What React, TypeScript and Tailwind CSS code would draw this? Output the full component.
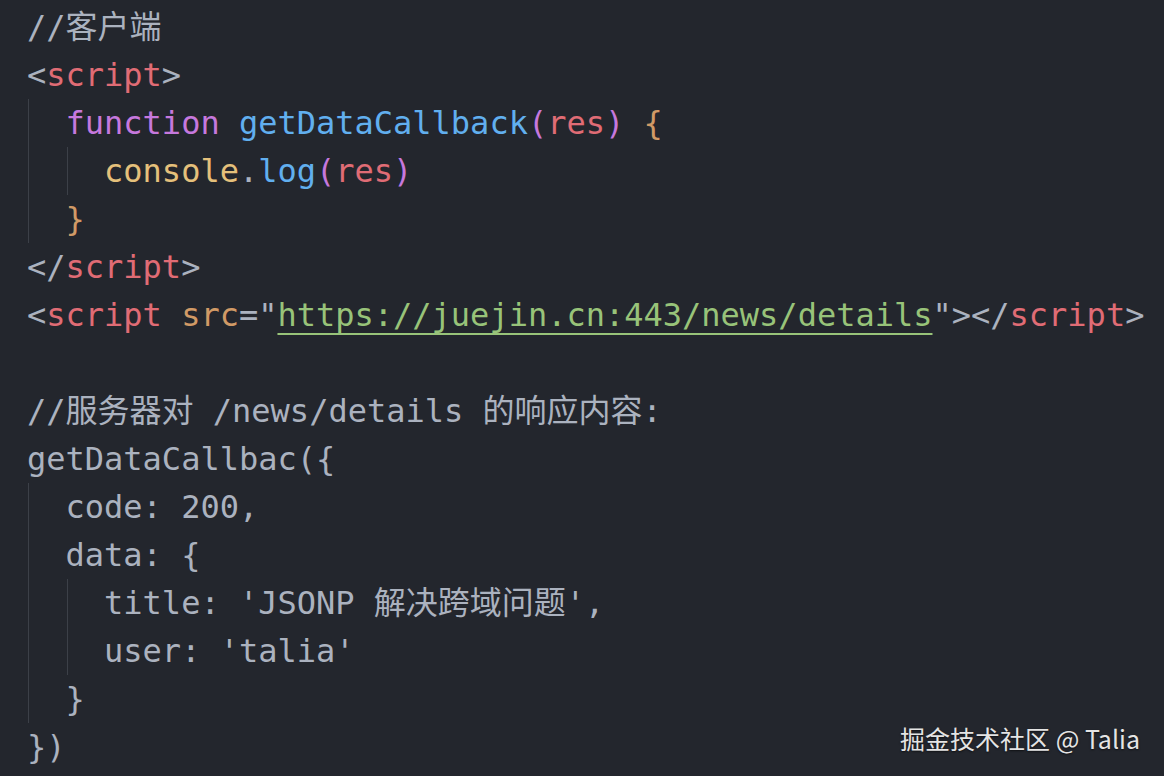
import React from "react";

type Tok = [string, string?];

const G = "text-[#abb2bf]";
const R = "text-[#e06c75]";
const P = "text-[#c678dd]";
const B = "text-[#61afef]";
const Y = "text-[#e5c07b]";
const O = "text-[#d19a66]";
const GR = "text-[#98c379]";

type Line = { indent: number; guides: number; toks: Tok[] };

const lines: Line[] = [
  { indent: 0, guides: 0, toks: [["//客户端", G]] },
  { indent: 0, guides: 0, toks: [["<", G], ["script", R], [">", G]] },
  {
    indent: 1,
    guides: 1,
    toks: [
      ["function", P],
      [" ", G],
      ["getDataCallback", B],
      ["(", P],
      ["res", R],
      [")", P],
      [" ", G],
      ["{", O],
    ],
  },
  {
    indent: 2,
    guides: 2,
    toks: [
      ["console", Y],
      [".", G],
      ["log", B],
      ["(", P],
      ["res", R],
      [")", P],
    ],
  },
  { indent: 1, guides: 1, toks: [["}", O]] },
  { indent: 0, guides: 0, toks: [["</", G], ["script", R], [">", G]] },
  {
    indent: 0,
    guides: 0,
    toks: [
      ["<", G],
      ["script", R],
      [" ", G],
      ["src", O],
      ["=\"", G],
      ["URL", GR],
      ["\">", G],
      ["</", G],
      ["script", R],
      [">", G],
    ],
  },
  { indent: 0, guides: 0, toks: [] },
  { indent: 0, guides: 0, toks: [["//服务器对 /news/details 的响应内容:", G]] },
  { indent: 0, guides: 0, toks: [["getDataCallbac({", G]] },
  { indent: 1, guides: 1, toks: [["code: 200,", G]] },
  { indent: 1, guides: 1, toks: [["data: {", G]] },
  { indent: 2, guides: 2, toks: [["title: 'JSONP 解决跨域问题',", G]] },
  { indent: 2, guides: 2, toks: [["user: 'talia'", G]] },
  { indent: 1, guides: 1, toks: [["}", G]] },
  { indent: 0, guides: 0, toks: [["})", G]] },
];

export default function App() {
  return (
    <div className="w-[1164px] h-[776px] bg-[#23262d] overflow-hidden relative">
      <div className="pt-[3px] pl-[27px] font-['DejaVu_Sans_Mono','Noto_Sans_CJK_SC',monospace] text-[32px] leading-[48px] whitespace-pre">
        {lines.map((ln, i) => (
          <div key={i} className="flex h-[48px] items-stretch">
            {Array.from({ length: ln.indent }).map((_, j) => (
              <span
                key={j}
                className={
                  j < ln.guides
                    ? "inline-block w-[2ch] shrink-0 border-l border-[#3c4048] ml-[1px] -mr-[1px]"
                    : "inline-block w-[2ch] shrink-0"
                }
              />
            ))}
            <span>
              {ln.toks.map((t, k) =>
                t[0] === "URL" ? (
                  <span
                    key={k}
                    className={`${t[1]} underline decoration-[2px] underline-offset-[7px] decoration-[#98c379]`}
                  >
                    https://juejin.cn:443/news/details
                  </span>
                ) : (
                  <span key={k} className={t[1]}>
                    {t[0]}
                  </span>
                )
              )}
            </span>
          </div>
        ))}
      </div>
      <div className="absolute right-[24px] bottom-[21px] font-['Noto_Sans_CJK_SC',sans-serif] text-[25px] leading-[34px] text-[#e4e4e4] [text-shadow:0_1px_2px_rgba(0,0,0,0.6)]">
        掘金技术社区 @ Talia
      </div>
    </div>
  );
}
